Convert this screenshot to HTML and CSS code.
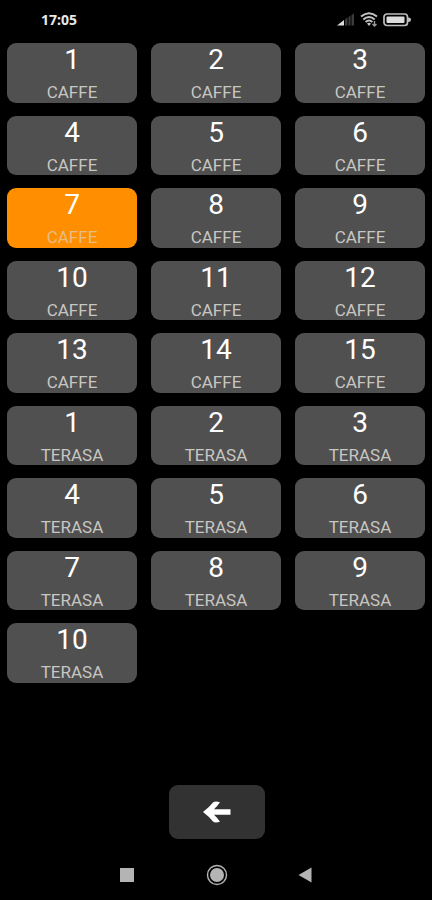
FILE: index.html
```html
<!DOCTYPE html>
<html lang="sr">
<head>
<meta charset="utf-8">
<meta name="viewport" content="width=device-width, initial-scale=1">
<title>Tables</title>
<link rel="stylesheet" href="styles.css">
</head>
<body>
<header class="status">
  <time class="clock">17:05</time>
  <div class="indicators">
    <svg width="18" height="14" viewBox="0 0 18 14" aria-hidden="true">
      <path d="M0 12.500L7 7V12.500Z" fill="#dcdcdc"/>
      <path d="M8 12.500V6.500L10.500 4.500V12.500ZM11.500 12.500V4L13.500 2.500V12.500ZM14.500 12.500V2L17 .5V12.500Z" fill="#3c3c3c"/>
    </svg>
    <svg width="18" height="15" viewBox="0 0 18 15" aria-hidden="true" fill="none" stroke="#c4c4c4" stroke-width="2">
      <path d="M1 4.500Q9 -2 17 4.500M3.300 7.500Q9 2.500 14.700 7.500M5.600 10Q9 7 12.400 10"/>
      <path d="M7 11.500Q9 10 11 11.500L9 14Z" fill="#c4c4c4" stroke="none"/>
      <path d="M14.500 9V14M12.500 12L14.500 14L16.500 12" stroke="#999" stroke-width="1.400"/>
    </svg>
    <svg width="28" height="14" viewBox="0 0 28 14" aria-hidden="true">
      <rect x="1" y="1" width="23.500" height="11.500" rx="3" fill="none" stroke="#bdbdbd" stroke-width="1.700"/>
      <rect x="3.500" y="3.500" width="18" height="6.500" rx="1" fill="#dcdcdc"/>
      <path d="M25 4.500Q28 4.500 28 6.700T25 9Z" fill="#bdbdbd"/>
    </svg>
  </div>
</header>
<main class="tables">
  <button class="tile"><span class="num">1</span><span class="zone">CAFFE</span></button>
  <button class="tile"><span class="num">2</span><span class="zone">CAFFE</span></button>
  <button class="tile"><span class="num">3</span><span class="zone">CAFFE</span></button>
  <button class="tile"><span class="num">4</span><span class="zone">CAFFE</span></button>
  <button class="tile"><span class="num">5</span><span class="zone">CAFFE</span></button>
  <button class="tile"><span class="num">6</span><span class="zone">CAFFE</span></button>
  <button class="tile active"><span class="num">7</span><span class="zone">CAFFE</span></button>
  <button class="tile"><span class="num">8</span><span class="zone">CAFFE</span></button>
  <button class="tile"><span class="num">9</span><span class="zone">CAFFE</span></button>
  <button class="tile"><span class="num">10</span><span class="zone">CAFFE</span></button>
  <button class="tile"><span class="num">11</span><span class="zone">CAFFE</span></button>
  <button class="tile"><span class="num">12</span><span class="zone">CAFFE</span></button>
  <button class="tile"><span class="num">13</span><span class="zone">CAFFE</span></button>
  <button class="tile"><span class="num">14</span><span class="zone">CAFFE</span></button>
  <button class="tile"><span class="num">15</span><span class="zone">CAFFE</span></button>
  <button class="tile"><span class="num">1</span><span class="zone">TERASA</span></button>
  <button class="tile"><span class="num">2</span><span class="zone">TERASA</span></button>
  <button class="tile"><span class="num">3</span><span class="zone">TERASA</span></button>
  <button class="tile"><span class="num">4</span><span class="zone">TERASA</span></button>
  <button class="tile"><span class="num">5</span><span class="zone">TERASA</span></button>
  <button class="tile"><span class="num">6</span><span class="zone">TERASA</span></button>
  <button class="tile"><span class="num">7</span><span class="zone">TERASA</span></button>
  <button class="tile"><span class="num">8</span><span class="zone">TERASA</span></button>
  <button class="tile"><span class="num">9</span><span class="zone">TERASA</span></button>
  <button class="tile"><span class="num">10</span><span class="zone">TERASA</span></button>
</main>
<div class="actions">
  <button class="back" aria-label="Back">
    <svg width="28" height="22" viewBox="0 0 28 22" aria-hidden="true">
      <path d="M0 11Q6 6.500 10 1.500Q12 -.3 17 1.200Q14.500 5 11 8.200H27.500V13.800H11Q14.500 17 17 20.800Q12 22.300 10 20.500Q6 15.500 0 11Z" fill="#fff"/>
    </svg>
  </button>
</div>
<nav class="sysnav">
  <button class="key" aria-label="Recent apps">
    <svg width="22" height="22" viewBox="0 0 22 22" aria-hidden="true"><rect x="4" y="4" width="14" height="14" fill="#b4b4b4"/></svg>
  </button>
  <button class="key" aria-label="Home">
    <svg width="22" height="22" viewBox="0 0 22 22" aria-hidden="true"><circle cx="11" cy="11" r="9.500" fill="none" stroke="#b4b4b4" stroke-width="1.400"/><circle cx="11" cy="11" r="7" fill="#b4b4b4"/></svg>
  </button>
  <button class="key" aria-label="System back">
    <svg width="22" height="22" viewBox="0 0 22 22" aria-hidden="true"><path d="M2.500 11L15.500 3.500V18.500Z" fill="#b4b4b4"/></svg>
  </button>
</nav>
</body>
</html>
```
FILE: styles.css
```css
* {
  box-sizing: border-box;
}

body {
  margin: 0;
  min-height: 100vh;
  display: flex;
  flex-direction: column;
  background: #000;
  color: #fff;
  font-family: Roboto, "Liberation Sans", sans-serif;
}

button {
  margin: 0;
  padding: 0;
  border: 0;
  background: none;
  color: inherit;
  font: inherit;
}

svg {
  display: block;
}

.status {
  display: flex;
  align-items: center;
  justify-content: space-between;
  height: 43px;
  padding: 0 21px 4px 41px;
}

.clock {
  font: bold 14px/18px "Noto Sans", sans-serif;
  color: #e8e8e8;
}

.indicators {
  display: flex;
  align-items: center;
  gap: 5px;
}

.tables {
  flex: 1;
  display: grid;
  grid-template-columns: repeat(3, 1fr);
  grid-template-rows: repeat(9, minmax(59px, 1fr));
  gap: 13px 14px;
  padding: 0 7px;
}

.tile {
  display: flex;
  flex-direction: column;
  align-items: center;
  gap: 7px;
  border-radius: 9px;
  background: #505050;
}

.num {
  font-size: 28px;
  line-height: 33px;
}

.zone {
  font-size: 17px;
  line-height: 18px;
  color: #c8c6c2;
}

.active {
  background: #ff8f00;
}

.active .zone {
  color: #e6bd85;
}

.actions {
  display: flex;
  justify-content: center;
  padding: 102px 0 10px 2px;
}

.back {
  display: flex;
  align-items: center;
  justify-content: center;
  width: 96px;
  height: 54px;
  border-radius: 9px;
  background: #323232;
}

.sysnav {
  display: flex;
  justify-content: center;
  gap: 68px;
  height: 51px;
  padding-left: 2px;
}

.key {
  display: flex;
  align-items: center;
}
```
